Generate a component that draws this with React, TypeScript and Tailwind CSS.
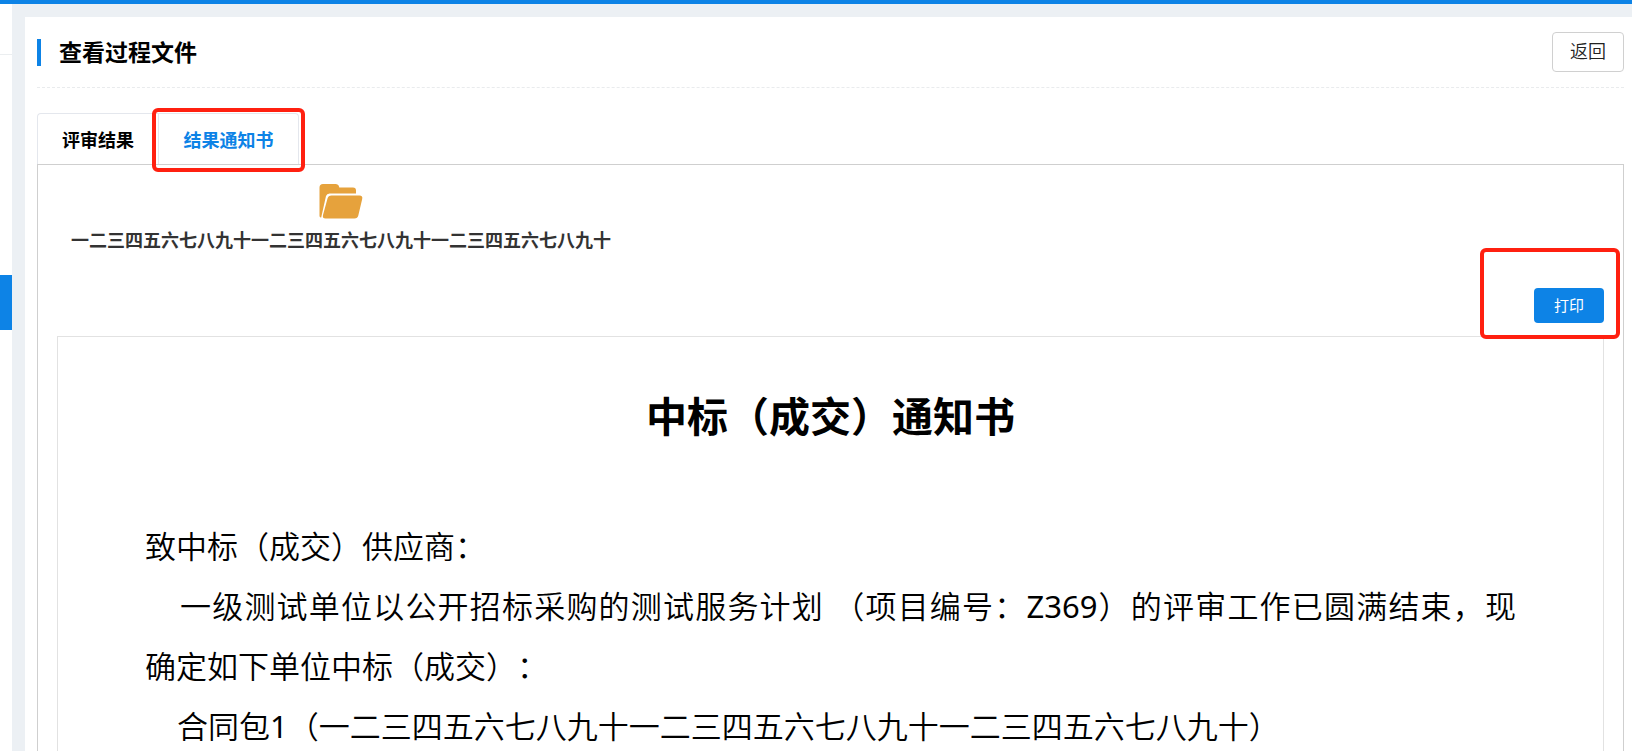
import React from "react";

const NUMERALS = "一二三四五六七八九十一二三四五六七八九十一二三四五六七八九十";

function FolderIcon() {
  return (
    <svg viewBox="0 0 44 36" className="h-9 w-11" fill="#e6a23c" aria-hidden="true">
      <path d="M0.5 33V4.5Q0.5 1 4 1H16.500Q19.500 1 20 3.500L20.300 4.500H34Q37 4.500 37 7.500V10.500H10.500Q7.800 10.500 7 13L2.200 34.500Q0.500 34.500 0.500 33Z" />
      <path d="M12.500 12.500H40.500Q44 12.500 43.200 16L39.300 32.500Q38.600 35.500 35.500 35.500H6.500Q3.200 35.500 4 32L8.500 15.500Q9.300 12.500 12.500 12.500Z" />
    </svg>
  );
}

function Sidebar() {
  return (
    <aside className="flex w-3 shrink-0 flex-col bg-white">
      <div className="h-[50px]" />
      <div className="h-px bg-[#ebeef0]" />
      <div className="h-[220px]" />
      <div className="h-[55px] bg-[#0d83e6]" />
    </aside>
  );
}

function PageHeader() {
  return (
    <header className="flex h-[71px] items-center justify-between border-b border-dashed border-[#e9ebed]">
      <h1 className="flex items-center gap-[18px] text-[23px] leading-[27px] font-bold text-black">
        <span className="h-[27px] w-1 bg-[#0d83e6]" />
        查看过程文件
      </h1>
      <button
        type="button"
        className="h-10 w-[72px] rounded border border-[#d0d0d0] pb-0.5 text-[18px] leading-6 font-[350] text-[#222]"
      >
        返回
      </button>
    </header>
  );
}

function Tabs() {
  return (
    <div role="tablist" className="mt-[25px] flex h-[51px] text-[18px] font-bold">
      <button
        type="button"
        role="tab"
        aria-selected="false"
        className="w-[121px] rounded-tl border-t border-l border-[#e4e7ed] pt-0.5 text-black"
      >
        评审结果
      </button>
      <div className="relative w-[141px]">
        <button
          type="button"
          role="tab"
          aria-selected="true"
          className="h-full w-full rounded-tr border-t border-r border-l border-[#e4e7ed] pt-0.5 text-[#0d83e6]"
        >
          结果通知书
        </button>
        <div className="pointer-events-none absolute -inset-x-[6px] -top-[5px] -bottom-2 z-10 rounded-md border-4 border-[#ff2010]" />
      </div>
    </div>
  );
}

function Notice() {
  return (
    <article className="border border-[#e2e2e2] px-[87px] text-black [text-spacing-trim:space-all]">
      <h2 className="mt-[49px] text-center text-[41px] leading-[60px] font-bold">
        中标（成交）通知书
      </h2>
      <div className="mt-[70px] text-[31px] leading-[60px] font-[350]">
        <p>致中标（成交）供应商：</p>
        <p>
          <span className="block indent-[35px] [text-align-last:justify]">
            一级测试单位以公开招标采购的测试服务计划 （项目编号：
            <span className="font-normal">Z369</span>
            ）的评审工作已圆满结束，现
          </span>
          确定如下单位中标（成交）：
        </p>
        <p className="indent-[32px]">
          合同包<span className="font-normal">1</span>（{NUMERALS}）
        </p>
      </div>
    </article>
  );
}

export default function App() {
  return (
    <div
      lang="zh-CN"
      className="flex h-screen flex-col overflow-hidden bg-[#ecf0f4] font-['Noto_Sans','Noto_Sans_CJK_SC',sans-serif]"
    >
      <div className="h-1 shrink-0 bg-[#0d83e6]" />
      <div className="flex min-h-0 flex-1">
        <Sidebar />
        <main className="mt-[13px] ml-[13px] min-w-0 flex-1 bg-white pr-2 pl-3">
          <PageHeader />
          <Tabs />
          <section className="border border-[#cfcfcf] px-[19px] pt-[18px]">
            <div className="flex w-[568px] flex-col items-center">
              <FolderIcon />
              <p className="mt-[7px] text-[18px] leading-7 font-bold whitespace-nowrap text-[#333]">
                {NUMERALS}
              </p>
            </div>
            <div className="mt-[34px] mb-[13px] flex justify-end">
              <div className="relative">
                <button
                  type="button"
                  className="block h-[35px] w-[70px] rounded bg-[#0d83e6] text-[15px] text-white"
                >
                  打印
                </button>
                <div className="pointer-events-none absolute -top-10 -right-4 -bottom-4 -left-[54px] rounded-md border-4 border-[#ff2010]" />
              </div>
            </div>
            <Notice />
          </section>
        </main>
      </div>
    </div>
  );
}
